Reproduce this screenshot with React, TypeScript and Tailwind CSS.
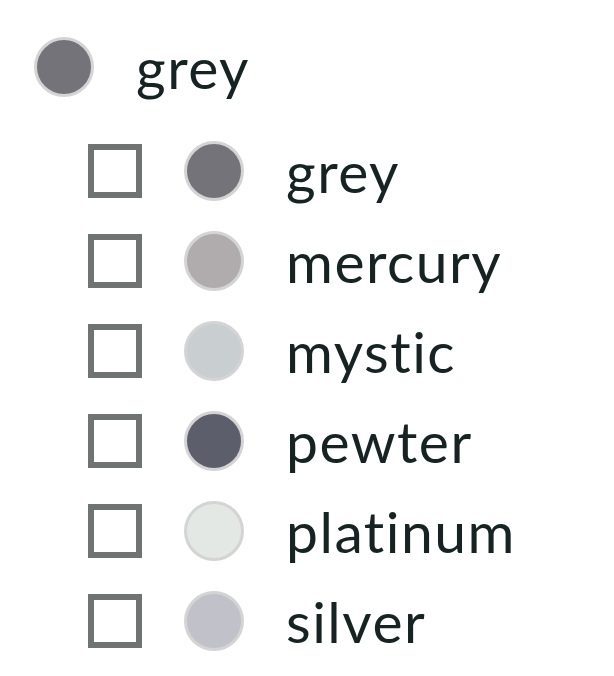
import React from "react";

type Swatch = { name: string; color: string };

const swatches: Swatch[] = [
  { name: "grey", color: "#75737a" },
  { name: "mercury", color: "#b0acae" },
  { name: "mystic", color: "#c9ced1" },
  { name: "pewter", color: "#5c5e6b" },
  { name: "platinum", color: "#e4e8e5" },
  { name: "silver", color: "#c0c1c9" },
];

const Dot: React.FC<{ color: string }> = ({ color }) => (
  <span
    className="block w-[60px] h-[60px] shrink-0 rounded-full border-[3px] border-[#d4d4d4]"
    style={{ backgroundColor: color }}
  />
);

const App: React.FC = () => {
  return (
    <div className="w-[614px] h-[676px] bg-white pt-[37px] font-['Lato',sans-serif] text-[#172323] [font-variant-ligatures:none] tracking-[1.5px]">
      <div className="flex items-center h-[60px] pl-[34px] gap-[42px]">
        <Dot color="#75737a" />
        <span className="text-[57px] leading-none">grey</span>
      </div>

      <ul className="mt-[29px] flex flex-col">
        {swatches.map((s) => (
          <li key={s.name} className="flex items-center h-[90px] pl-[88px]">
            <span className="block w-[54px] h-[54px] shrink-0 border-[6px] border-[#6f7472] bg-white" />
            <span className="ml-[42px]">
              <Dot color={s.color} />
            </span>
            <span className="ml-[42px] text-[57px] leading-none">{s.name}</span>
          </li>
        ))}
      </ul>
    </div>
  );
};

export default App;
